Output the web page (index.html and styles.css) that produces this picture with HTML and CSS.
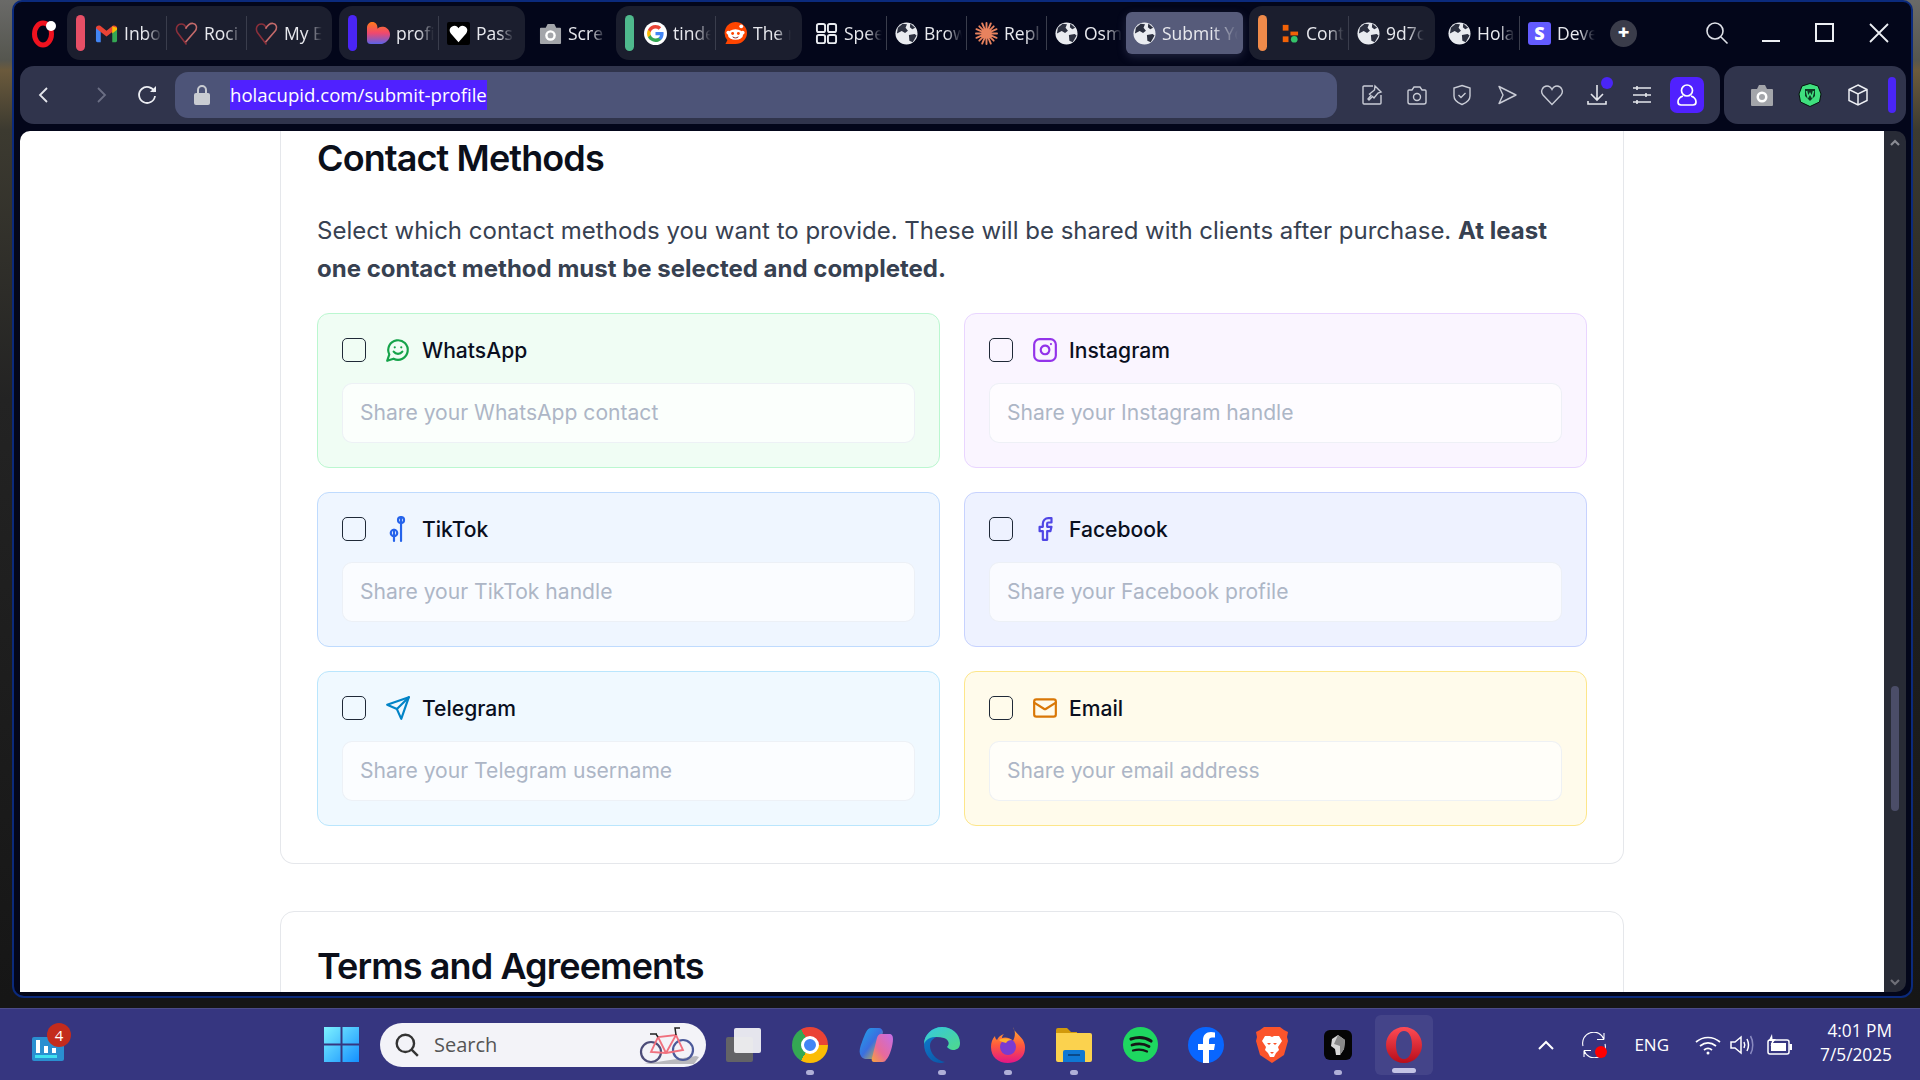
FILE: index.html
```html
<!DOCTYPE html>
<html lang="en">
<head>
    <meta charset="UTF-8">
    <meta name="viewport" content="width=device-width, initial-scale=1.0">
    <title>Submit Your Profile</title>
    <link rel="stylesheet" href="styles.css">
</head>
<body>
    <svg class="defs" width="0" height="0">
        <symbol id="globe" viewBox="0 0 24 24">
            <circle cx="12" cy="12" r="11.5" fill="#e9ebf0"/>
            <path fill="#2c3040" d="M3 6 8 1.800l4.500.5L11 6l2.500 3-3 2.500L7 9.500 2 12zM14.500 13.500l6-1 2 1.500-4 7-3.500-1.500zM16 1.500l5 4.500-3 1.500-2.500-2z"/>
        </symbol>
        <symbol id="heart-line" viewBox="0 0 24 24">
            <path fill="none" stroke="#8a2f3a" stroke-width="1.6" d="M12 23.500 2.500 11C0 6.500 2.500 2 6.500 2c2.800 0 4.500 1.800 5.500 5"/>
            <path fill="none" stroke="#c46a6a" stroke-width="1.6" d="M11 21 21 9.500c2.500-3.500 1.500-7.500-2-8-3-.5-6 2-8 5.500"/>
        </symbol>
    </svg>

    <div class="desktop">
        <div class="window">
            <div class="tab-bar">
                <svg class="opera-logo" width="28" height="30" viewBox="0 0 28 30">
                    <ellipse cx="12" cy="16" rx="8.500" ry="11" fill="none" stroke="#f0121f" stroke-width="5"/>
                    <circle cx="20" cy="8" r="5" fill="#fff"/>
                </svg>
                <div class="tab-strip">
                    <div class="tab-group group-first">
                        <span class="group-bar bar-red"></span>
                        <div class="tab">
                            <svg class="tab-icon" viewBox="0 0 24 24">
                                <path fill="#4285f4" d="M1 6h5v15H2.500A1.500 1.500 0 0 1 1 19.500z"/>
                                <path fill="#34a853" d="M18 6h5v13.500a1.500 1.500 0 0 1-1.500 1.500H18z"/>
                                <path fill="#ea4335" d="M1 6.500C1 3.500 4 3 5.500 4L12 9l6.500-5C20 3 23 3.500 23 6.500L12 15z"/>
                                <path fill="#fbbc04" d="M18 4.500 23 6v2l-5 4z"/>
                            </svg>
                            <span class="tab-title">Inbo</span>
                        </div>
                        <div class="tab">
                            <svg class="tab-icon"><use href="#heart-line"/></svg>
                            <span class="tab-title">Roci</span>
                        </div>
                        <div class="tab tab-last">
                            <svg class="tab-icon"><use href="#heart-line"/></svg>
                            <span class="tab-title">My E</span>
                        </div>
                    </div>
                    <div class="tab-group">
                        <span class="group-bar bar-blue"></span>
                        <div class="tab">
                            <svg class="tab-icon" viewBox="0 0 24 24">
                                <defs><linearGradient id="holaGrad" x1="0" y1="0" x2="0" y2="1"><stop offset="0" stop-color="#ff7a1a"/><stop offset=".5" stop-color="#f0486e"/><stop offset="1" stop-color="#5a62e8"/></linearGradient></defs>
                                <path fill="url(#holaGrad)" d="M0 6c0-4 3-6 5.500-6C9 0 11 2.500 11 7c1-1.500 3.500-2.500 6-2 4 .5 7 4 7 8 0 6-5 9-9 10H4c-3 0-4-2-4-4z"/>
                            </svg>
                            <span class="tab-title">profi</span>
                        </div>
                        <div class="tab tab-last">
                            <svg class="tab-icon" viewBox="0 0 24 24">
                                <rect width="24" height="24" rx="2" fill="#000"/>
                                <path fill="#fff" d="M12 21 4 12c-3-4 0-8 4-8 2 0 3 1 4 2.500C13 5 14 4 16 4c4 0 7 4 4 8z"/>
                            </svg>
                            <span class="tab-title">Pass</span>
                        </div>
                    </div>
                    <div class="tab tab-narrow">
                        <svg class="tab-icon" viewBox="0 0 24 24">
                            <path fill="#a3a5aa" d="M2 6h5l2-4h7l2 4h4a1 1 0 0 1 1 1v15a1 1 0 0 1-1 1H2a1 1 0 0 1-1-1V7a1 1 0 0 1 1-1z"/>
                            <circle cx="12" cy="14" r="5.500" fill="#fff"/>
                            <circle cx="12" cy="14" r="3" fill="#a3a5aa"/>
                        </svg>
                        <span class="tab-title">Scre</span>
                    </div>
                    <div class="tab-group">
                        <span class="group-bar bar-green"></span>
                        <div class="tab">
                            <svg class="tab-icon" viewBox="0 0 24 24">
                                <circle cx="12" cy="12" r="12" fill="#fff"/>
                                <g transform="translate(2.400 2.400) scale(.8)">
                                    <path fill="#4285F4" d="M22.560 12.250c0-.78-.07-1.530-.2-2.250H12v4.260h5.920c-.26 1.370-1.040 2.530-2.210 3.310v2.770h3.570c2.080-1.920 3.280-4.740 3.280-8.090z"/>
                                    <path fill="#34A853" d="M12 23c2.970 0 5.460-.98 7.280-2.660l-3.570-2.770c-.98.66-2.230 1.060-3.710 1.060-2.860 0-5.290-1.930-6.160-4.530H2.180v2.840C3.990 20.530 7.700 23 12 23z"/>
                                    <path fill="#FBBC05" d="M5.840 14.090c-.22-.66-.35-1.360-.35-2.090s.13-1.430.35-2.090V7.070H2.180C1.430 8.550 1 10.220 1 12s.43 3.450 1.180 4.930l3.660-2.840z"/>
                                    <path fill="#EA4335" d="M12 5.380c1.620 0 3.060.56 4.210 1.640l3.150-3.150C17.450 2.090 14.970 1 12 1 7.700 1 3.990 3.470 2.180 7.070l3.660 2.840c.87-2.600 3.300-4.530 6.160-4.530z"/>
                                </g>
                            </svg>
                            <span class="tab-title">tinde</span>
                        </div>
                        <div class="tab tab-last">
                            <svg class="tab-icon" viewBox="0 0 24 24">
                                <path fill="#ff4500" d="M12 0a12 11.500 0 0 1 0 23H1.500L3.500 19A11.500 11.500 0 0 1 12 0z"/>
                                <ellipse cx="12" cy="13" rx="8" ry="5.500" fill="#fff"/>
                                <circle cx="4.500" cy="11" r="2" fill="#fff"/>
                                <circle cx="19.500" cy="11" r="2" fill="#fff"/>
                                <circle cx="18" cy="4.500" r="2" fill="#fff"/>
                                <circle cx="9" cy="12" r="1.500" fill="#ff4500"/>
                                <circle cx="15" cy="12" r="1.500" fill="#ff4500"/>
                                <path fill="none" stroke="#842123" d="M9 15.500c2 1.500 4 1.500 6 0"/>
                            </svg>
                            <span class="tab-title">The r</span>
                        </div>
                    </div>
                    <div class="tab tab-speed">
                        <svg class="tab-icon" viewBox="0 0 24 24" fill="none" stroke="#e9ebf0" stroke-width="2">
                            <rect x="2" y="2" width="8.500" height="8.500" rx="2"/>
                            <rect x="13.500" y="2" width="8.500" height="8.500" rx="2"/>
                            <rect x="2" y="13.500" width="8.500" height="8.500" rx="2"/>
                            <rect x="13.500" y="13.500" width="8.500" height="8.500" rx="2"/>
                        </svg>
                        <span class="tab-title">Spee</span>
                    </div>
                    <div class="tab tab-tight">
                        <svg class="tab-icon"><use href="#globe"/></svg>
                        <span class="tab-title">Brow</span>
                    </div>
                    <div class="tab tab-tight">
                        <svg class="tab-icon" viewBox="0 0 24 24" stroke="#e8825e" stroke-width="2" stroke-linecap="round">
                            <path d="M12 1v22M1 12h22M4.500 4.500l15 15M19.500 4.500l-15 15M7.500 1.500l9 21M16.500 1.500l-9 21M1.500 7.500l21 9M22.500 7.500l-21 9"/>
                        </svg>
                        <span class="tab-title">Repl</span>
                    </div>
                    <div class="tab tab-tight tab-last">
                        <svg class="tab-icon"><use href="#globe"/></svg>
                        <span class="tab-title">Osm</span>
                    </div>
                    <div class="tab tab-active">
                        <svg class="tab-icon"><use href="#globe"/></svg>
                        <span class="tab-title">Submit Yo</span>
                    </div>
                    <div class="tab-group">
                        <span class="group-bar bar-orange"></span>
                        <div class="tab">
                            <svg class="tab-icon" viewBox="0 0 24 24">
                                <rect x="6" y="3" width="6" height="6" fill="#f26207"/>
                                <rect x="14" y="10" width="8" height="4" fill="#f26207"/>
                                <rect x="6" y="15" width="6" height="6" fill="#f26207"/>
                                <circle cx="18" cy="18" r="3.500" fill="#35c46a"/>
                            </svg>
                            <span class="tab-title">Cont</span>
                        </div>
                        <div class="tab tab-last">
                            <svg class="tab-icon"><use href="#globe"/></svg>
                            <span class="tab-title">9d7c</span>
                        </div>
                    </div>
                    <div class="tab tab-tight-left">
                        <svg class="tab-icon"><use href="#globe"/></svg>
                        <span class="tab-title">Hola</span>
                    </div>
                    <div class="tab tab-tight tab-last">
                        <span class="tab-icon stripe-icon">S</span>
                        <span class="tab-title">Deve</span>
                    </div>
                </div>
                <button class="new-tab">+</button>
                <div class="win-controls">
                    <span class="win-btn">
                        <svg width="24" height="24" viewBox="0 0 24 24" fill="none" stroke="#dfe1e8" stroke-width="1.600"><circle cx="10" cy="10" r="8"/><path d="m16 16 6.500 6.500"/></svg>
                    </span>
                    <span class="win-btn">
                        <svg width="24" height="24" viewBox="0 0 24 24" stroke="#eceef3" stroke-width="2"><path d="M3 20h18"/></svg>
                    </span>
                    <span class="win-btn">
                        <svg width="24" height="24" viewBox="0 0 24 24" fill="none" stroke="#eceef3" stroke-width="2"><rect x="3" y="3" width="17" height="17"/></svg>
                    </span>
                    <span class="win-btn">
                        <svg width="24" height="24" viewBox="0 0 24 24" fill="none" stroke="#eceef3" stroke-width="1.800"><path d="m3 3 18 18M21 3 3 21"/></svg>
                    </span>
                </div>
            </div>

            <div class="address-row">
                <div class="toolbar toolbar-main">
                    <span class="nav-btn nav-back">
                        <svg width="20" height="20" viewBox="0 0 20 20" fill="none" stroke="#e4e6ec" stroke-width="1.800"><path d="m13 3-7 7 7 7"/></svg>
                    </span>
                    <span class="nav-btn nav-forward">
                        <svg width="20" height="20" viewBox="0 0 20 20" fill="none" stroke="#6b6f84" stroke-width="1.800"><path d="m7 3 7 7-7 7"/></svg>
                    </span>
                    <span class="nav-btn nav-reload">
                        <svg width="22" height="22" viewBox="0 0 22 22" fill="none" stroke="#eceef3" stroke-width="1.800"><path d="M18.500 8A8 8 0 1 0 19 12"/><path fill="#eceef3" stroke="none" d="M14 8h6V2z"/></svg>
                    </span>
                    <div class="url-bar">
                        <svg class="lock-icon" width="16" height="22" viewBox="0 0 16 22"><path fill="none" stroke="#c9ccd2" stroke-width="2" d="M4 10V6a4 4 0 0 1 8 0v4"/><rect y="9" width="16" height="12" rx="2" fill="#c9ccd2"/></svg>
                        <span class="url-text">holacupid.com/submit-profile</span>
                    </div>
                    <div class="tool-icons">
                        <span class="tool-btn">
                            <svg width="22" height="22" viewBox="0 0 22 22" fill="none" stroke="#c9ccd6" stroke-width="1.400"><path d="M12 2H3a1 1 0 0 0-1 1v16a1 1 0 0 0 1 1h16a1 1 0 0 0 1-1v-8"/><path d="m14 2 6 6-3 1-4 5-1.500-1.500L8 16l-1-1 3-3.500L8.500 10l5-4z"/></svg>
                        </span>
                        <span class="tool-btn">
                            <svg width="22" height="22" viewBox="0 0 22 22" fill="none" stroke="#c9ccd6" stroke-width="1.400"><path d="M2 7a1 1 0 0 1 1-1h3l2-3h6l2 3h3a1 1 0 0 1 1 1v11a2 2 0 0 1-2 2H4a2 2 0 0 1-2-2z"/><circle cx="11" cy="13" r="3.500"/></svg>
                        </span>
                        <span class="tool-btn">
                            <svg width="22" height="22" viewBox="0 0 22 22" fill="none" stroke="#c9ccd6" stroke-width="1.400"><path d="M11 1.500 19 4v8c0 4-4 7-8 8.500C7 19 3 16 3 12V4z"/><path d="m7.500 11 2.500 2.500 4.500-4.500"/></svg>
                        </span>
                        <span class="tool-btn">
                            <svg width="22" height="22" viewBox="0 0 22 22" fill="none" stroke="#c9ccd6" stroke-width="1.400"><path d="M3 2.500 20 11 3 19.500 7 11z" stroke-linejoin="round"/></svg>
                        </span>
                        <span class="tool-btn">
                            <svg width="24" height="22" viewBox="0 0 24 22" fill="none" stroke="#c9ccd6" stroke-width="1.400"><path d="M12 20.500 3 11C0 7.500 2.500 2 7 2c2.500 0 4 1.500 5 3.500C13 3.500 14.500 2 17 2c4.500 0 7 5.500 4 9z"/></svg>
                        </span>
                        <span class="tool-btn tool-download">
                            <svg width="22" height="22" viewBox="0 0 22 22" fill="none" stroke="#e4e6ec" stroke-width="1.600"><path d="M11 1v14M5 10l6 6 6-6M2 17v3h18v-3"/></svg>
                            <span class="notify-dot"></span>
                        </span>
                        <span class="tool-btn">
                            <svg width="22" height="22" viewBox="0 0 22 22" stroke="#e4e6ec" stroke-width="1.600"><path d="M2 4h18M2 11h18M2 18h18M6 2v4M15 9v4M6 16v4"/></svg>
                        </span>
                    </div>
                    <span class="profile-btn">
                        <svg width="22" height="24" viewBox="0 0 22 24" fill="none" stroke="#fff" stroke-width="1.700"><circle cx="11" cy="7.500" r="5.500"/><path d="M7 13c-3 1-5 3-5 6 0 2 1 3 3 3h12c2 0 3-1 3-3 0-3-2-5-5-6"/></svg>
                    </span>
                </div>
                <div class="toolbar toolbar-side">
                    <span class="side-btn">
                        <svg width="24" height="24" viewBox="0 0 24 24"><path fill="#a3a5aa" d="M2 6h5l2-4h6l2 4h5a1 1 0 0 1 1 1v15a1 1 0 0 1-1 1H2a1 1 0 0 1-1-1V7a1 1 0 0 1 1-1z"/><circle cx="12" cy="14" r="5.500" fill="#fff"/><circle cx="12" cy="14" r="3" fill="#a3a5aa"/></svg>
                    </span>
                    <span class="side-btn">
                        <svg width="24" height="26" viewBox="0 0 24 24"><path fill="#3fe07f" stroke="#05130c" d="M12 .5 20 3l3 8-1.500 8-9.500 4.500L2.500 19 1 11l3-8z"/><path fill="#0c3a24" d="M7 6h10v7l-5 5-5-5z"/><path fill="none" stroke="#3fe07f" stroke-width="1.500" d="m8.500 8 1.500 6 2-3.500 2 3.500 1.500-6"/></svg>
                    </span>
                    <span class="side-btn">
                        <svg width="22" height="24" viewBox="0 0 22 24" fill="none" stroke="#eceef3" stroke-width="1.500"><path d="M11 2 20 6.500v11L11 22l-9-4.500v-11zM2 6.500l9 4.500 9-4.500M11 11v11"/></svg>
                    </span>
                    <span class="side-bar"></span>
                </div>
            </div>

            <div class="viewport">
                <main class="page">
                    <section class="card card-top">
                        <h2 class="card-title">Contact Methods</h2>
                        <p class="card-text">Select which contact methods you want to provide. These will be shared with clients after purchase. <strong>At least one contact method must be selected and completed.</strong></p>
                        <div class="method-grid">
                            <div class="method method-whatsapp">
                                <label class="method-head">
                                    <input class="method-check" type="checkbox">
                                    <svg class="method-icon" viewBox="0 0 24 24"><path d="M7.900 20A9 9 0 1 0 4 16.100L2 22Z"/><path d="M8 13.500s1.500 2 4 2 4-2 4-2M9 9.500h.01M15 9.500h.01"/></svg>
                                    <span class="method-name">WhatsApp</span>
                                </label>
                                <input class="method-input" type="text" placeholder="Share your WhatsApp contact">
                            </div>
                            <div class="method method-instagram">
                                <label class="method-head">
                                    <input class="method-check" type="checkbox">
                                    <svg class="method-icon" viewBox="0 0 24 24"><rect x="2" y="2" width="20" height="20" rx="5"/><path d="M16 11.370A4 4 0 1 1 12.630 8 4 4 0 0 1 16 11.370z"/><path d="M17.500 6.500h.01"/></svg>
                                    <span class="method-name">Instagram</span>
                                </label>
                                <input class="method-input" type="text" placeholder="Share your Instagram handle">
                            </div>
                            <div class="method method-tiktok">
                                <label class="method-head">
                                    <input class="method-check" type="checkbox">
                                    <svg class="method-icon" viewBox="0 0 24 24"><circle cx="14.800" cy="3.800" r="2.800"/><path d="M14.800 1v22"/><circle cx="8.300" cy="15.700" r="3"/><path d="M8.300 12.700V23"/></svg>
                                    <span class="method-name">TikTok</span>
                                </label>
                                <input class="method-input" type="text" placeholder="Share your TikTok handle">
                            </div>
                            <div class="method method-facebook">
                                <label class="method-head">
                                    <input class="method-check" type="checkbox">
                                    <svg class="method-icon" viewBox="0 0 24 24"><path d="M18 2h-3a5 5 0 0 0-5 5v3H7v4h3v8h4v-8h3l1-4h-4V7a1 1 0 0 1 1-1h3z"/></svg>
                                    <span class="method-name">Facebook</span>
                                </label>
                                <input class="method-input" type="text" placeholder="Share your Facebook profile">
                            </div>
                            <div class="method method-telegram">
                                <label class="method-head">
                                    <input class="method-check" type="checkbox">
                                    <svg class="method-icon" viewBox="0 0 24 24"><path d="m22 2-7 20-4-9-9-4Z"/><path d="M22 2 11 13"/></svg>
                                    <span class="method-name">Telegram</span>
                                </label>
                                <input class="method-input" type="text" placeholder="Share your Telegram username">
                            </div>
                            <div class="method method-email">
                                <label class="method-head">
                                    <input class="method-check" type="checkbox">
                                    <svg class="method-icon" viewBox="0 0 24 24"><rect x="2" y="4" width="20" height="16" rx="2"/><path d="m22 7-8.970 5.700a1.940 1.940 0 0 1-2.060 0L2 7"/></svg>
                                    <span class="method-name">Email</span>
                                </label>
                                <input class="method-input" type="text" placeholder="Share your email address">
                            </div>
                        </div>
                    </section>
                    <section class="card card-terms">
                        <h2 class="card-title">Terms and Agreements</h2>
                    </section>
                </main>
                <div class="scrollbar">
                    <svg class="scroll-arrow" width="10" height="8" viewBox="0 0 10 8" fill="none" stroke="#8a8c94" stroke-width="2.200"><path d="m1 6 4-4 4 4"/></svg>
                    <span class="scroll-thumb"></span>
                    <svg class="scroll-arrow scroll-arrow-down" width="10" height="8" viewBox="0 0 10 8" fill="none" stroke="#6f7078" stroke-width="2.200"><path d="m1 2 4 4 4-4"/></svg>
                </div>
            </div>
        </div>
    </div>

    <footer class="taskbar">
        <div class="widget">
            <svg width="32" height="24" viewBox="0 0 32 24"><rect width="32" height="24" rx="2" fill="#2a8fd0"/><path fill="#fff" d="M4 3h4v13H4zM12 9h4v7h-4zM20 11h4v5h-4z"/><rect x="3" y="18" width="22" height="3" fill="#3ee0f0"/></svg>
            <span class="widget-badge">4</span>
        </div>
        <svg class="start-logo" width="35" height="35" viewBox="0 0 35 35">
            <defs><linearGradient id="winGrad" x1="0" y1="0" x2="1" y2="1"><stop offset="0" stop-color="#7df2ff"/><stop offset="1" stop-color="#1490ff"/></linearGradient></defs>
            <path fill="url(#winGrad)" d="M0 0h16.500v16.500H0zM18.500 0H35v16.500H18.500zM0 18.500h16.500V35H0zM18.500 18.500H35V35H18.500z"/>
        </svg>
        <div class="search-pill">
            <svg width="26" height="26" viewBox="0 0 24 24" fill="none" stroke="#333" stroke-width="2.200"><circle cx="10.500" cy="10.500" r="8"/><path d="m16 16 6 6"/></svg>
            <span class="search-text">Search</span>
            <svg class="bike" width="62" height="40" viewBox="0 0 62 40" fill="none">
                <path fill="#b9b9bd" d="M6 39 58 31l3 1-5 7z"/>
                <circle cx="13" cy="27" r="10" stroke="#4c4c78" stroke-width="2.200"/>
                <circle cx="45" cy="25" r="10" stroke="#4c5a9a" stroke-width="2.200"/>
                <path stroke="#f0707e" stroke-width="1.800" d="m13 27 7-15 18-2 7 15-17 3zM20 12l8 16M38 10l-10 18"/>
                <path stroke="#222" stroke-width="1.500" d="M38 10l-1-7h5M20 12l-2-3h-4M12 9h7"/>
            </svg>
        </div>
        <div class="task-apps">
            <span class="task-app">
                <svg width="36" height="34" viewBox="0 0 36 34"><rect y="9" width="27" height="25" rx="2" fill="#636366"/><rect x="8" width="27" height="25" rx="2" fill="#f4f4f6" opacity=".92"/></svg>
            </span>
            <span class="task-app is-running">
                <span class="chrome-logo"></span>
            </span>
            <span class="task-app">
                <svg width="34" height="36" viewBox="0 0 34 36">
                    <defs>
                        <linearGradient id="copA" x1="0" y1="0" x2="1" y2="1"><stop offset="0" stop-color="#1ea7e8"/><stop offset=".5" stop-color="#3a6fe0"/><stop offset="1" stop-color="#f2c21b"/></linearGradient>
                        <linearGradient id="copB" x1="1" y1="0" x2="0" y2="1"><stop offset="0" stop-color="#c46ee8"/><stop offset=".6" stop-color="#e86a9a"/><stop offset="1" stop-color="#f7a53a"/></linearGradient>
                    </defs>
                    <path fill="url(#copA)" d="M12 1h8c2 0 3 1 4 4l-6 24c-1 2-2 3-4 3H8C4 32 2 30 1 27 0 24 1 20 3 15 6 7 8 1 12 1z"/>
                    <path fill="url(#copB)" d="M22 7h8c3 0 4 2 4 5 0 6-3 17-7 21-1 2-3 2-5 2h-7c-2 0-3-2-2-4l5-20c1-3 2-4 4-4z"/>
                </svg>
            </span>
            <span class="task-app is-running">
                <svg width="36" height="36" viewBox="0 0 36 36">
                    <defs>
                        <linearGradient id="edgeA" x1="0" y1="0" x2="1" y2="1"><stop offset="0" stop-color="#35c8e0"/><stop offset="1" stop-color="#4fd98a"/></linearGradient>
                        <linearGradient id="edgeB" x1="0" y1="0" x2="1" y2="1"><stop offset="0" stop-color="#0f7fd0"/><stop offset="1" stop-color="#0a4a9a"/></linearGradient>
                    </defs>
                    <path fill="url(#edgeB)" d="M0 17C0 8 8 0 18 0c10 0 18 7 18 16 0 5-3 7-7 7-2 0-5-1-6-3 3-2 3-7-2-10C14 8 6 11 6 19c0 6 5 14 15 16-2 1-4 1-5 1C7 36 0 27 0 17z"/>
                    <path fill="url(#edgeA)" d="M0 17C0 8 8 0 18 0c10 0 18 7 18 16 0 5-3 7-7 7-2 0-4-1-6-3 3-3 2-7-3-9C13 9 3 9 0 17z"/>
                </svg>
            </span>
            <span class="task-app is-running">
                <svg width="34" height="36" viewBox="0 0 34 36">
                    <defs><linearGradient id="foxGrad" x1="0" y1="0" x2="0" y2="1"><stop offset="0" stop-color="#ffb02e"/><stop offset=".5" stop-color="#ff5a3c"/><stop offset="1" stop-color="#e31587"/></linearGradient></defs>
                    <path fill="url(#foxGrad)" d="M22 0c1 5 7 8 10 13 2 4 2 6 2 8 0 9-7 15-17 15S0 30 0 20c0-4 1-8 4-11 0 2 1 3 2 4 1-3 4-5 7-6-2 2-2 3-2 4 2-1 8-1 11 3 2-4 3-9 0-14z"/>
                    <circle cx="17" cy="20" r="8" fill="#7a3bd0"/>
                    <path fill="#ffb02e" d="M8 13c3-2 9-2 13 0-3 0-5 1-6 3-2-1-5-1-7-3z"/>
                </svg>
            </span>
            <span class="task-app is-running">
                <svg width="36" height="34" viewBox="0 0 36 34">
                    <path fill="#d19a0c" d="M0 2a2 2 0 0 1 2-2h9l4 4h6v8H0z"/>
                    <path fill="#fbd24e" d="M0 5h34a2 2 0 0 1 2 2v25a2 2 0 0 1-2 2H2a2 2 0 0 1-2-2z"/>
                    <path fill="#0f78d4" d="M7 34V24a2 2 0 0 1 2-2h18a2 2 0 0 1 2 2v10z"/>
                    <path fill="#0a4a8a" d="M12 26h12v2H12z"/>
                </svg>
            </span>
            <span class="task-app">
                <svg width="35" height="35" viewBox="0 0 35 35"><circle cx="17.500" cy="17.500" r="17.500" fill="#1ed760"/><path fill="none" stroke="#161616" stroke-linecap="round" stroke-width="3.200" d="M8 12c6-2 14-2 20 2"/><path fill="none" stroke="#161616" stroke-linecap="round" stroke-width="2.800" d="M9 18c5-1.500 12-1.500 17 1.500"/><path fill="none" stroke="#161616" stroke-linecap="round" stroke-width="2.200" d="M10 23.500c4-1 10-1 14 1"/></svg>
            </span>
            <span class="task-app">
                <svg width="36" height="36" viewBox="0 0 36 36"><circle cx="18" cy="18" r="18" fill="#0866ff"/><path fill="#fff" d="M15 36V23h-5v-6h5v-4c0-5 3-8 8-8l4 .4v5h-3c-2 0-3 1-3 3V17h6l-1 6h-5v13z"/></svg>
            </span>
            <span class="task-app">
                <svg width="32" height="36" viewBox="0 0 32 36"><path fill="#fb542b" d="M8 0h16l4 3 4 2-1 5 1 4-4 14-12 8-12-8L0 14l1-4-1-5 4-2z"/><path fill="#fff" d="M9 9h5l2 1 2-1h5l3 5-4 6 1 3-3 3-2 4h-4l-2-4-3-3 1-3-4-6z"/><path fill="#fb542b" d="M11 16h4l-2 2zM17 16h4l-2 2zM14 25h4l-2 2z"/></svg>
            </span>
            <span class="task-app is-running">
                <svg width="28" height="30" viewBox="0 0 28 30"><rect width="28" height="30" rx="6" fill="#050505"/><path fill="#d8d8d8" d="m14 5 7 5-1 9-4 6h-4l-1-6-4-3 1-7z"/><path fill="#8a8a8a" d="m14 5 7 5-1 9-4 6v-9l-6-2z"/></svg>
            </span>
            <span class="task-app is-active">
                <svg width="36" height="36" viewBox="0 0 36 36">
                    <defs><linearGradient id="opGrad" x1="0" y1="0" x2="0" y2="1"><stop offset="0" stop-color="#ff4b55"/><stop offset="1" stop-color="#b80d1a"/></linearGradient></defs>
                    <path fill="url(#opGrad)" fill-rule="evenodd" d="M18 0c10 0 18 8 18 18s-8 18-18 18S0 28 0 18 8 0 18 0zm0 4c-5 0-8 6-8 14s3 14 8 14 8-6 8-14-3-14-8-14z"/>
                </svg>
            </span>
        </div>
        <div class="tray">
            <svg class="tray-chevron" width="18" height="12" viewBox="0 0 18 12" fill="none" stroke="#fff" stroke-width="2"><path d="m2 10 7-7 7 7"/></svg>
            <span class="tray-sync">
                <svg width="24" height="26" viewBox="0 0 24 26" fill="none" stroke="#fff" stroke-width="1.100"><path d="M1 14A11 11 0 0 1 22 7.500M22 7.500V1M22 7.500h-7M23 12A11 11 0 0 1 2 18.500M2 18.500V25M2 18.500h7"/></svg>
                <span class="sync-dot"></span>
            </span>
            <span class="tray-lang">ENG</span>
            <svg class="tray-wifi" width="26" height="20" viewBox="0 0 26 20" fill="none" stroke="#fff" stroke-width="1.700"><path d="M1 7c7-6 17-6 24 0M5 11c5-4 11-4 16 0M9 15c2.500-2 5.500-2 8 0"/><circle cx="13" cy="18" r="1.500" fill="#fff" stroke="none"/></svg>
            <svg class="tray-sound" width="26" height="22" viewBox="0 0 26 22" fill="none" stroke="#fff" stroke-width="1.500"><path d="M1 8v6h4l6 5V3L5 8z"/><path d="M14 8c1 2 1 4 0 6M17 5c2 4 2 8 0 12"/><path stroke="#8a8ac0" d="M20.500 2c3 5 3 13 0 18"/></svg>
            <svg class="tray-battery" width="26" height="22" viewBox="0 0 26 22" fill="none"><rect x="1" y="6" width="21" height="14" rx="2" stroke="#fff" stroke-width="1.500"/><rect x="4" y="9" width="15" height="8" fill="#fff"/><path fill="#fff" d="M22.500 10H25v6h-2.500zM5 0 1.500 7H5L3.500 12 9 5H5.500z"/></svg>
            <div class="tray-clock">
                <span>4:01 PM</span>
                <span>7/5/2025</span>
            </div>
        </div>
    </footer>
</body>
</html>
```

FILE: styles.css
```css
* {
    box-sizing: border-box;
}

html,
body {
    margin: 0;
    height: 100%;
    overflow: hidden;
}

body {
    width: 1920px;
    height: 1080px;
    display: flex;
    flex-direction: column;
    background: #141414;
    font-family: "Open Sans", "Noto Sans", sans-serif;
}

.defs {
    position: absolute;
}

.desktop {
    height: 1008px;
    padding: 0 7px 10px 12px;
    background:
        linear-gradient(180deg, #6a6a68 0, #55564f 60px, #6b5a3c 70px, #3c3a30 130px, #232323 400px, #161616 1000px);
}

/* browser window */
.window {
    height: 100%;
    padding: 4px 5px 5px 6px;
    display: flex;
    flex-direction: column;
    background: #03061a;
    border: 2px solid #0b2a7c;
    border-radius: 10px 10px 12px 12px;
}

.tab-bar {
    height: 54px;
    flex: none;
    display: flex;
    align-items: center;
}

.opera-logo {
    width: 28px;
    margin: 0 8px 0 11px;
}

.tab-strip {
    display: flex;
    align-items: center;
    gap: 6px;
}

.tab-group {
    height: 54px;
    padding: 0 6px 0 9px;
    display: flex;
    align-items: center;
    background: #1b1e2e;
    border-radius: 13px;
}

.group-first {
    margin-right: 1px;
    padding-right: 5px;
}

.group-bar {
    width: 9px;
    height: 36px;
    margin-right: 2px;
    border-radius: 5px;
}

.bar-red { background: #e64f66; }
.bar-blue { background: #4a25f5; }
.bar-green { background: #4fb98d; }
.bar-orange { background: #ef8a4a; }

.tab {
    width: 80px;
    height: 34px;
    flex: none;
    display: flex;
    align-items: center;
    gap: 6px;
    padding: 0 2px 0 8px;
    color: #e8e9ee;
    font-size: 17.5px;
    white-space: nowrap;
    border-right: 1px solid #3a3d4c;
}

.tab-last {
    border-right: 0;
}

.tab-narrow {
    width: 79px;
    border-right: 0;
}

.tab-speed {
    margin-left: -1px;
}

.tab-tight {
    margin-left: -6px;
}

.tab-tight-left {
    margin-left: -1px;
}

.tab-icon {
    width: 23px;
    height: 23px;
    flex: none;
}

.tab-title {
    flex: none;
    -webkit-mask-image: linear-gradient(90deg, #000 22px, transparent 38px);
    mask-image: linear-gradient(90deg, #000 22px, transparent 38px);
}

.tab-active {
    width: 117px;
    height: 42px;
    margin-left: -7px;
    padding-left: 7px;
    background: #565b7a;
    border: 0;
    border-radius: 6px;
    box-shadow: 0 3px 10px rgba(120, 125, 170, 0.25);
}

.tab-active .tab-title {
    -webkit-mask-image: linear-gradient(90deg, #000 50px, transparent 76px);
    mask-image: linear-gradient(90deg, #000 50px, transparent 76px);
}

.stripe-icon {
    display: flex;
    align-items: center;
    justify-content: center;
    background: #635bff;
    color: #fff;
    font-size: 18px;
    font-weight: 800;
    border-radius: 3px;
}

.new-tab {
    width: 27px;
    height: 27px;
    margin-left: 10px;
    padding: 0 0 3px;
    color: #fff;
    font: 800 20px/24px "Open Sans", sans-serif;
    background: #3a3c4a;
    border: 0;
    border-radius: 50%;
}

.win-controls {
    margin-left: auto;
    display: flex;
}

.win-btn {
    width: 54px;
    height: 54px;
    display: flex;
    align-items: center;
    justify-content: center;
}

/* toolbars */
.address-row {
    height: 58px;
    flex: none;
    margin-top: 6px;
    display: flex;
    gap: 4px;
}

.toolbar {
    display: flex;
    align-items: center;
    background: #30344c;
    border-radius: 14px;
}

.toolbar-main {
    width: 1700px;
}

.toolbar-side {
    width: 182px;
    padding-left: 14px;
}

.nav-btn {
    height: 30px;
    flex: none;
    display: flex;
    align-items: center;
    justify-content: center;
}

.nav-back { width: 48px; }
.nav-forward { width: 66px; }
.nav-reload { width: 26px; margin-right: 15px; }

.url-bar {
    width: 1162px;
    height: 46px;
    padding-left: 19px;
    display: flex;
    align-items: center;
    gap: 20px;
    background: #4d5478;
    border-radius: 13px;
}

.url-text {
    height: 30px;
    color: #fff;
    font-size: 18.6px;
    line-height: 30px;
    white-space: nowrap;
    background: #5021ff;
}

.tool-icons {
    margin-left: 12px;
    display: flex;
}

.tool-btn {
    width: 45px;
    height: 36px;
    display: flex;
    align-items: center;
    justify-content: center;
}

.tool-download {
    position: relative;
}

.notify-dot {
    position: absolute;
    top: 0;
    right: 6px;
    width: 12px;
    height: 12px;
    background: #4a25f5;
    border-radius: 50%;
}

.profile-btn {
    width: 34px;
    height: 36px;
    margin-left: 6px;
    display: flex;
    align-items: center;
    justify-content: center;
    background: #5021ff;
    border-radius: 7px;
}

.side-btn {
    width: 48px;
    height: 36px;
    display: flex;
    align-items: center;
    justify-content: center;
}

.side-bar {
    width: 8px;
    height: 36px;
    margin-left: 6px;
    background: #4a25f5;
    border-radius: 4px;
}

/* page content */
.viewport {
    height: 861px;
    flex: none;
    margin-top: 7px;
    display: flex;
}

.page {
    width: 1864px;
    padding: 0 260px;
    overflow: hidden;
    background: #fff;
    border-radius: 10px 0 0 0;
    font-family: "Inter", "Liberation Sans", sans-serif;
}

.card {
    margin-bottom: 47px;
    padding: 36px 36px 37px;
    background: #fff;
    border: 1px solid #e5e7eb;
    border-radius: 14px;
}

.card-top {
    padding-top: 7px;
    border-top: 0;
    border-radius: 0 0 14px 14px;
}

.card-terms {
    padding-top: 34px;
}

.card-title {
    margin: 0;
    color: #0b0f1a;
    font-size: 36px;
    font-weight: 600;
    line-height: 40px;
    letter-spacing: -0.9px;
}

.card-text {
    margin: 34px 0 24px;
    color: #374151;
    font-size: 24px;
    line-height: 38.4px;
}

.card-text strong {
    font-weight: 700;
}

.method-grid {
    display: grid;
    grid-template-columns: 1fr 1fr;
    gap: 24px;
}

.method {
    height: 155px;
    padding: 24px;
    border: 1px solid;
    border-radius: 12px;
}

.method-whatsapp { --accent: #16a34a; background: #f0fdf4; border-color: #bbf7d0; }
.method-instagram { --accent: #9333ea; background: #faf5ff; border-color: #e9d5ff; }
.method-tiktok { --accent: #2563eb; background: #eff6ff; border-color: #bfdbfe; }
.method-facebook { --accent: #4f46e5; background: #eef2ff; border-color: #c7d2fe; }
.method-telegram { --accent: #0284c7; background: #f0f9ff; border-color: #bae6fd; }
.method-email { --accent: #d97706; background: #fffbeb; border-color: #fde68a; }

.method-head {
    height: 24px;
    margin-bottom: 21px;
    display: flex;
    align-items: center;
    color: #0a0f1e;
    font-size: 21.1px;
    font-weight: 500;
}

.method-name {
    padding-top: 2px;
}

.method-check {
    width: 24px;
    height: 24px;
    margin: 0 19px 0 0;
    appearance: none;
    background: transparent;
    border: 1.5px solid #1f2937;
    border-radius: 5px;
}

.method-icon {
    width: 26px;
    height: 26px;
    margin-right: 11px;
    fill: none;
    stroke: var(--accent);
    stroke-width: 2;
    stroke-linecap: round;
    stroke-linejoin: round;
}

.method-input {
    display: block;
    width: 100%;
    height: 60px;
    padding: 0 17px;
    font-family: inherit;
    font-size: 21.1px;
    background: rgba(255, 255, 255, 0.7);
    border: 1px solid rgba(226, 232, 240, 0.6);
    border-radius: 10px;
}

.method-input::placeholder {
    color: #adb6c6;
    opacity: 1;
}

.scrollbar {
    width: 22px;
    padding: 8px 0 6px;
    display: flex;
    flex-direction: column;
    align-items: center;
    background: #282b36;
    border-radius: 0 10px 10px 0;
}

.scroll-thumb {
    width: 8px;
    height: 125px;
    margin-top: 539px;
    background: #4b4d68;
    border-radius: 4px;
}

.scroll-arrow-down {
    margin-top: auto;
}

/* windows taskbar */
.taskbar {
    height: 72px;
    flex: none;
    padding-left: 32px;
    display: flex;
    align-items: center;
    color: #fff;
    background: #363680;
    border-top: 1px solid #4b4b8a;
}

.widget {
    position: relative;
    width: 32px;
    height: 24px;
    margin-top: 8px;
}

.widget-badge {
    position: absolute;
    top: -14px;
    right: -7px;
    width: 24px;
    height: 24px;
    color: #fff;
    font-size: 15px;
    line-height: 24px;
    text-align: center;
    background: #c42b1c;
    border-radius: 50%;
}

.start-logo {
    margin-left: 260px;
    flex: none;
}

.search-pill {
    width: 326px;
    height: 44px;
    margin-left: 21px;
    padding: 0 6px 0 14px;
    display: flex;
    align-items: center;
    background: #f3f3f8;
    border-radius: 22px;
}

.search-text {
    margin-left: 14px;
    color: #555;
    font-size: 20px;
}

.bike {
    margin-left: auto;
}

.task-apps {
    margin-left: 5px;
    display: flex;
}

.task-app {
    position: relative;
    width: 66px;
    height: 60px;
    display: flex;
    align-items: center;
    justify-content: center;
}

.is-running::after {
    content: "";
    position: absolute;
    bottom: 0;
    left: 29px;
    width: 8px;
    height: 5px;
    background: #b0b0d8;
    border-radius: 3px;
}

.is-active {
    margin: 0 4px;
    width: 58px;
    background: rgba(255, 255, 255, 0.07);
    border-radius: 6px;
}

.is-active::after {
    content: "";
    position: absolute;
    bottom: 2px;
    left: 17px;
    width: 24px;
    height: 5px;
    background: #c4c4e6;
    border-radius: 3px;
}

.chrome-logo {
    position: relative;
    width: 36px;
    height: 36px;
    background: conic-gradient(#ea4335 0 90deg, #fbbc04 90deg 210deg, #34a853 210deg 330deg, #ea4335 330deg);
    border-radius: 50%;
}

.chrome-logo::after {
    content: "";
    position: absolute;
    inset: 9px;
    background: #4285f4;
    border: 3px solid #fff;
    border-radius: 50%;
}

.tray {
    margin-left: auto;
    padding-right: 28px;
    display: flex;
    align-items: center;
}

.tray-sync {
    position: relative;
    width: 24px;
    height: 26px;
    margin-left: 27px;
}

.sync-dot {
    position: absolute;
    right: -1px;
    bottom: 0;
    width: 12px;
    height: 12px;
    background: #f00;
    border-radius: 50%;
}

.tray-lang {
    margin-left: 28px;
    font-size: 17px;
}

.tray-wifi {
    margin-left: 26px;
}

.tray-sound {
    margin-left: 9px;
}

.tray-battery {
    margin-left: 11px;
}

.tray-clock {
    margin: 0 0 4px 27px;
    display: flex;
    flex-direction: column;
    align-items: flex-end;
    font-size: 17.3px;
    line-height: 24px;
}
```
